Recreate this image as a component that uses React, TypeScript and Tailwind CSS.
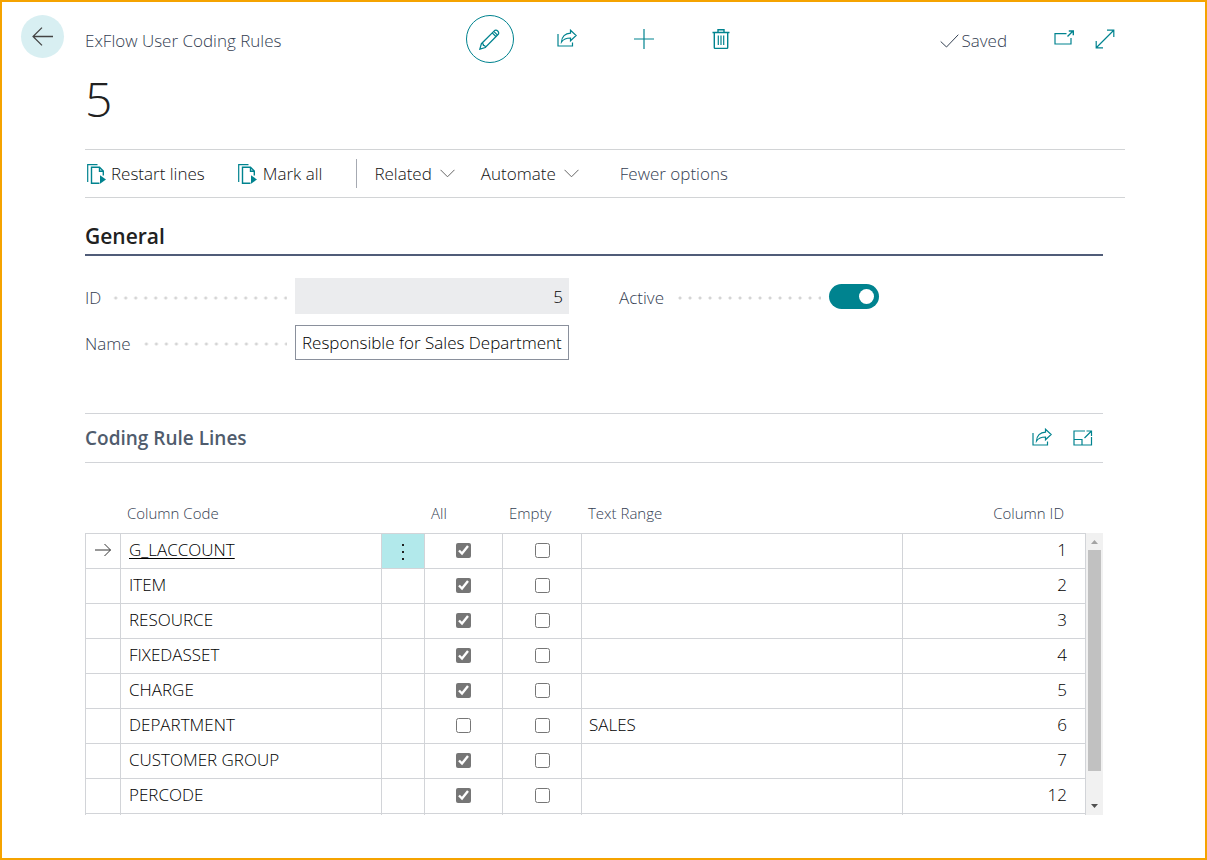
import { ReactNode } from "react";

type RuleLine = {
  code: string;
  all: boolean;
  empty: boolean;
  range: string;
  columnId: number;
};

const lines: RuleLine[] = [
  { code: "G_LACCOUNT", all: true, empty: false, range: "", columnId: 1 },
  { code: "ITEM", all: true, empty: false, range: "", columnId: 2 },
  { code: "RESOURCE", all: true, empty: false, range: "", columnId: 3 },
  { code: "FIXEDASSET", all: true, empty: false, range: "", columnId: 4 },
  { code: "CHARGE", all: true, empty: false, range: "", columnId: 5 },
  { code: "DEPARTMENT", all: false, empty: false, range: "SALES", columnId: 6 },
  { code: "CUSTOMER GROUP", all: true, empty: false, range: "", columnId: 7 },
  { code: "PERCODE", all: true, empty: false, range: "", columnId: 12 },
];

const Icon = ({ children, className = "size-5" }: { children: ReactNode; className?: string }) => (
  <svg
    viewBox="0 0 20 20"
    className={className}
    fill="none"
    stroke="currentColor"
    strokeWidth="1.2"
    aria-hidden="true"
  >
    {children}
  </svg>
);

const ShareIcon = () => (
  <Icon>
    <path d="M1 5v12h14.500v-3.500" />
    <path d="M13.500 1.200 19.200 6.500l-5.700 5.300V9C9.500 9 6.500 10 4.500 13c.3-5 3.500-8.700 9-8.900z" />
  </Icon>
);

const LinesIcon = () => (
  <Icon>
    <path d="M.7 18V.7h9.800" />
    <path d="M12.500 19.300H4.500V3.300h8l3.800 3.800v4.400M12.500 3.300v4h3.800" strokeWidth="1.400" />
    <path d="M13 11.300v8.400l6-4.200z" fill="currentColor" stroke="none" />
  </Icon>
);

const Chevron = () => (
  <svg viewBox="0 0 15 9" className="h-[9px] w-[15px] text-[#666]" fill="none" stroke="currentColor" aria-hidden="true">
    <path d="m.5.800 7 7 7-7" />
  </svg>
);

const HeaderButton = ({ label, round, children }: { label: string; round?: boolean; children: ReactNode }) => (
  <button
    type="button"
    aria-label={label}
    className={
      round
        ? "flex size-12 items-center justify-center rounded-full border border-[#00838f]"
        : "flex size-12 items-center justify-center"
    }
  >
    {children}
  </button>
);

const Field = ({ id, label, children }: { id: string; label: string; children: ReactNode }) => (
  <div className="flex h-9 items-center">
    <div className="flex w-[210px] shrink-0 items-center gap-3 pt-[3px] pr-2">
      <label htmlFor={id} className="text-[#344052]">
        {label}
      </label>
      <span className="h-[10px] flex-1 bg-[radial-gradient(circle,#d4d4d4_1px,transparent_2px)] bg-[length:10px_10px] bg-[position:right_-4px_center]" />
    </div>
    {children}
  </div>
);

const Header = () => (
  <header className="grid h-12 grid-cols-[1fr_auto_1fr] items-center">
    <p className="pt-[3px] text-[#344052]">ExFlow User Coding Rules</p>
    <div className="flex gap-[29px] text-[#00838f]">
      <HeaderButton label="Edit" round>
        <Icon className="size-[21px]">
          <path d="M.8 19.200 2.300 14 14.300 2c1.100-1.100 2.400-1.200 3.500-.1s1.200 2.500.1 3.600L6 17.600z" />
          <path d="m12.600 3.700 3.700 3.700M14.300 2.500l3.300 3.300M2.300 14c1.800-.2 2 .4 1.900 1.700 1.300 0 1.900.3 1.800 1.900" />
        </Icon>
      </HeaderButton>
      <HeaderButton label="Share">
        <ShareIcon />
      </HeaderButton>
      <HeaderButton label="New">
        <Icon>
          <path d="M10 0v20M0 10h20" />
        </Icon>
      </HeaderButton>
      <HeaderButton label="Delete">
        <Icon>
          <path d="M1.500 3.500h17M7 3V.8h6V3M3.300 3.500v15c0 .6.400.9 1 .9h11.400c.6 0 1-.3 1-.9v-15" strokeWidth="1.400" />
          <path d="M7.300 6.500v9.500M10 6.500v9.500M12.700 6.500v9.500" />
        </Icon>
      </HeaderButton>
    </div>
    <div className="flex items-center justify-end pr-[10px] text-[#00838f]">
      <span className="mr-[47px] flex items-center gap-[2px] pt-[3px] text-[#344052]">
        <svg viewBox="0 0 19 14" className="h-[14px] w-[19px]" fill="none" stroke="currentColor" aria-hidden="true">
          <path d="m.7 7.500 5.800 5.500L18.300.7" />
        </svg>
        Saved
      </span>
      <button type="button" aria-label="Open in new window" className="mr-[21px]">
        <Icon>
          <path d="M12.500 4.600H1V15h16V9" strokeWidth="1.200" />
          <path d="m13.500 7.500 5-5M14.800 2h4.500v4.300" strokeWidth="1.400" />
        </Icon>
      </button>
      <button type="button" aria-label="Expand page">
        <Icon>
          <path d="M1.500 18.500 18.500 1.500M12 1.200h6.800V8M1.200 12v6.800H8" />
        </Icon>
      </button>
    </div>
  </header>
);

const ActionBar = () => (
  <nav className="flex h-[49px] items-center border-y border-[#d2d4d6] text-[#111]">
    <button type="button" className="flex items-center gap-1 pl-[2px]">
      <span className="text-[#00838f]"><LinesIcon /></span>
      Restart lines
    </button>
    <button type="button" className="ml-[33px] flex items-center gap-[5px]">
      <span className="text-[#00838f]"><LinesIcon /></span>
      Mark all
    </button>
    <span className="ml-[34px] h-[29px] w-px bg-[#a6aab2]" />
    <button type="button" className="ml-[17px] flex items-center gap-2">
      Related <Chevron />
    </button>
    <button type="button" className="ml-[26px] flex items-center gap-2">
      Automate <Chevron />
    </button>
    <button type="button" className="ml-[41px] text-[#344052]">
      Fewer options
    </button>
  </nav>
);

const General = () => (
  <section>
    <h2 className="mt-5 border-b-2 border-[#505c78] text-[21px] leading-9 font-semibold text-[#212121]">
      General
    </h2>
    <div className="mt-[22px] grid grid-cols-2 gap-x-[50px]">
      <div className="flex flex-col gap-[10px]">
        <Field id="rule-id" label="ID">
          <input
            id="rule-id"
            readOnly
            defaultValue="5"
            className="h-9 min-w-0 flex-1 bg-[#ebecee] px-[6px] text-right text-black"
          />
        </Field>
        <Field id="rule-name" label="Name">
          <input
            id="rule-name"
            defaultValue="Responsible for Sales Department"
            className="h-[35px] min-w-0 flex-1 border border-[#8a909c] px-[6px] text-black"
          />
        </Field>
      </div>
      <Field id="rule-active" label="Active">
        <input
          id="rule-active"
          type="checkbox"
          role="switch"
          defaultChecked
          className="flex h-[25px] w-[50px] appearance-none items-center rounded-full bg-[#00838f] px-[5px] before:size-[15px] before:rounded-full before:bg-white checked:justify-end"
        />
      </Field>
    </div>
  </section>
);

const Scrollbar = () => (
  <div className="mt-[38px] flex w-[17px] shrink-0 flex-col items-center bg-[#f1f1f1]" aria-hidden="true">
    <svg viewBox="0 0 17 17" className="size-[17px] shrink-0">
      <path d="M5 11h7L8.500 7z" fill="#a3a3a3" />
    </svg>
    <div className="h-[221px] w-[13px] bg-[#c1c1c1]" />
    <svg viewBox="0 0 17 17" className="mt-auto size-[17px] shrink-0">
      <path d="M5 6h7l-3.500 4z" fill="#505050" />
    </svg>
  </div>
);

const LinesTable = () => (
  <div className="mt-8 flex">
    <table className="w-full min-w-0 flex-1 table-fixed border-separate border-spacing-0 text-black">
      <colgroup>
        <col className="w-[36px]" />
        <col className="w-[261px]" />
        <col className="w-[43px]" />
        <col className="w-[78px]" />
        <col className="w-[79px]" />
        <col />
        <col className="w-[183px]" />
      </colgroup>
      <thead>
        <tr className="h-[39px] text-left text-[15px] text-[#344052] [&>th]:border-b [&>th]:border-[#d2d4d8] [&>th]:p-0 [&>th]:pb-[2px] [&>th]:font-light">
          <th />
          <th><span className="pl-[6px]">Column Code</span></th>
          <th />
          <th><span className="pl-[6px]">All</span></th>
          <th><span className="pl-[6px]">Empty</span></th>
          <th><span className="pl-[6px]">Text Range</span></th>
          <th className="text-right"><span className="pr-[22px]">Column ID</span></th>
        </tr>
      </thead>
      <tbody className="[&_td]:border-r [&_td]:border-[#d2d4d8] [&_td]:p-0 [&_td:first-child]:border-l">
        {lines.map((line, index) => (
          <tr key={line.code} className="h-[35px] [&>td]:border-b [&>td]:pb-[2px]">
            <td>
              {index === 0 && (
                <svg viewBox="0 0 16 14" className="mx-auto h-[14px] w-[16px]" fill="none" stroke="#333" aria-hidden="true">
                  <path d="M0 7h15.500M9.500 1l6 6-6 6" />
                </svg>
              )}
            </td>
            <td>
              <span className="pl-2">
                {index === 0 ? <a href="#line" className="underline underline-offset-2">{line.code}</a> : line.code}
              </span>
            </td>
            <td className={index === 0 ? "bg-[#b2e9eb]" : ""}>
              {index === 0 && (
                <button type="button" aria-label="More options" className="flex w-full justify-center pt-1">
                  <svg viewBox="0 0 4 18" className="h-[18px] w-1" fill="#212121">
                    <path d="M1 1h2v2H1zM1 8h2v2H1zM1 15h2v2H1z" />
                  </svg>
                </button>
              )}
            </td>
            <td>
              <input type="checkbox" aria-label={`${line.code} all`} defaultChecked={line.all} className="mx-auto block size-[15px] accent-[#767676]" />
            </td>
            <td>
              <input type="checkbox" aria-label={`${line.code} empty`} defaultChecked={line.empty} className="mx-auto block size-[15px] accent-[#767676]" />
            </td>
            <td><span className="pl-[7px]">{line.range}</span></td>
            <td className="text-right"><span className="pr-[18px]">{line.columnId}</span></td>
          </tr>
        ))}
        <tr className="h-px" aria-hidden="true">
          <td /><td /><td /><td /><td /><td /><td />
        </tr>
      </tbody>
    </table>
    <Scrollbar />
  </div>
);

export default function App() {
  return (
    <div className="flex min-h-screen border-2 border-[#f5a300] bg-white pt-[13px] font-['Open_Sans','Noto_Sans',sans-serif] text-[17px] leading-6 font-light">
      <div className="w-[83px] shrink-0 pl-[19px]">
        <button
          type="button"
          aria-label="Back"
          className="flex size-[43px] items-center justify-center rounded-full bg-[#d8eff2] text-[#444]"
        >
          <Icon className="size-[21px]">
            <path d="M20 10H1M9.500 1.500 1 10l8.500 8.500" />
          </Icon>
        </button>
      </div>
      <main className="min-w-0 flex-1 pr-20">
        <Header />
        <h1 className="mt-[6px] mb-5 text-[48px] leading-[60px] text-[#212121]">5</h1>
        <ActionBar />
        <div className="pr-[22px]">
          <General />
          <section className="mt-[53px]">
            <div className="flex h-[50px] items-center border-y border-[#d2d4d8] pr-[10px]">
              <h2 className="flex-1 text-[19px] font-semibold text-[#505c6d]">Coding Rule Lines</h2>
              <div className="flex gap-[21px] text-[#00838f]">
                <button type="button" aria-label="Share lines">
                  <ShareIcon />
                </button>
                <button type="button" aria-label="Expand lines">
                  <Icon>
                    <path d="M12 3H1v14h17.500V9M1 11.500h8V17" />
                    <path d="m11.500 10 7-7M13.500 3h5v5" />
                  </Icon>
                </button>
              </div>
            </div>
            <LinesTable />
          </section>
        </div>
      </main>
    </div>
  );
}
